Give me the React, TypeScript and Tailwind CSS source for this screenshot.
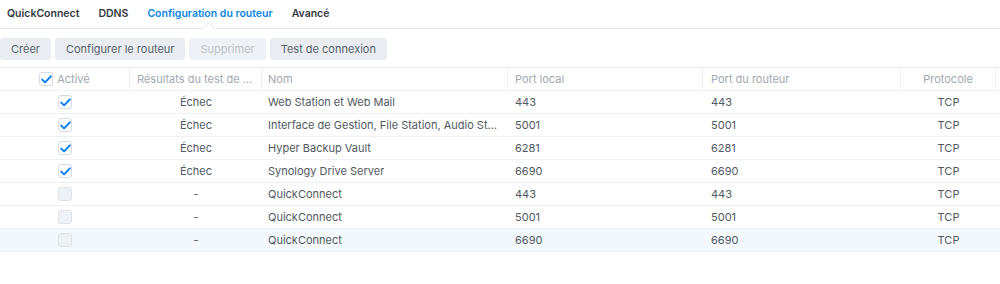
import React from "react";

const rows = [
  { on: true, res: "Échec", name: "Web Station et Web Mail", local: "443", router: "443" },
  { on: true, res: "Échec", name: "Interface de Gestion, File Station, Audio Station, Download Station", local: "5001", router: "5001" },
  { on: true, res: "Échec", name: "Hyper Backup Vault", local: "6281", router: "6281" },
  { on: true, res: "Échec", name: "Synology Drive Server", local: "6690", router: "6690" },
  { on: false, res: "-", name: "QuickConnect", local: "443", router: "443" },
  { on: false, res: "-", name: "QuickConnect", local: "5001", router: "5001" },
  { on: false, res: "-", name: "QuickConnect", local: "6690", router: "6690", hl: true },
];

function Check({ on }: { on: boolean }) {
  return (
    <div
      className={
        "w-[14px] h-[14px] shrink-0 rounded-[3px] border flex items-center justify-center " +
        (on ? "border-[#d5dbe2] bg-white" : "border-[#dde2e8] bg-[#eef1f5]")
      }
    >
      {on && (
        <svg width="11" height="9" viewBox="0 0 11 9">
          <path d="M1.2 4.6 L4.1 7.4 L9.8 1.4" fill="none" stroke="#0a7ff0" strokeWidth="2" strokeLinecap="round" strokeLinejoin="round" />
        </svg>
      )}
    </div>
  );
}

export default function App() {
  const font = { fontFamily: "Inter, 'Noto Sans', sans-serif" };
  return (
    <div className="w-[1000px] h-[284px] bg-white text-[11px] text-[#505962] overflow-hidden" style={font}>
      {/* Tabs */}
      <div className="relative h-[29px] border-b border-[#e3e7ec] flex items-center pl-[7px] gap-[19px] font-semibold text-[10.5px] pb-[1px]">
        <span className="text-[#323a42]">QuickConnect</span>
        <span className="text-[#323a42]">DDNS</span>
        <span className="text-[#0b86e3]">Configuration du routeur</span>
        <span className="text-[#323a42]">Avancé</span>
        <div className="absolute left-[204px] bottom-[-5px] w-[9px] h-[9px] rotate-45 bg-white border-l border-t border-[#e3e7ec]" />
      </div>
      {/* Buttons */}
      <div className="flex gap-[4px] mt-[9px] h-[22px]">
        <button className="h-[22px] px-[11px] rounded-[3px] bg-[#e9edf2] text-[#58626c]">Créer</button>
        <button className="h-[22px] px-[11px] rounded-[3px] bg-[#e9edf2] text-[#58626c]">Configurer le routeur</button>
        <button className="h-[22px] px-[11px] rounded-[3px] bg-[#eef1f5] text-[#bcc3cb]">Supprimer</button>
        <button className="h-[22px] px-[11px] rounded-[3px] bg-[#e9edf2] text-[#58626c]">Test de connexion</button>
      </div>
      {/* Table */}
      <div className="mt-[7px] border-t border-[#e7eaee]">
        <div className="flex h-[23px] border-b border-[#eef0f3] text-[#a0a8b0]">
          <div className="w-[130px] flex items-center justify-center gap-[4px] border-r border-[#eef0f3]">
            <Check on={true} />
            <span>Activé</span>
          </div>
          <div className="w-[132px] flex items-center px-[7px] border-r border-[#eef0f3] min-w-0 overflow-hidden">
            <span className="truncate">Résultats du test de connexion</span>
          </div>
          <div className="w-[246px] flex items-center px-[6px] border-r border-[#eef0f3]">Nom</div>
          <div className="w-[195px] flex items-center px-[7px] border-r border-[#eef0f3]">Port local</div>
          <div className="w-[198px] flex items-center px-[8px] border-r border-[#eef0f3]">Port du routeur</div>
          <div className="w-[95px] flex items-center justify-center border-r border-[#eef0f3]">Protocole</div>
          <div className="flex-1" />
        </div>
        {rows.map((r, i) => (
          <div key={i} className={"flex h-[23px] border-b border-[#eef0f3] " + (r.hl ? "bg-[#f3f8fd]" : "")}>
            <div className="w-[130px] flex items-center justify-center">
              <Check on={r.on} />
            </div>
            <div className="w-[132px] flex items-center justify-center">{r.res}</div>
            <div className="w-[246px] flex items-center px-[6px] min-w-0 overflow-hidden">
              <span className="truncate">{r.name}</span>
            </div>
            <div className="w-[195px] flex items-center px-[7px]">{r.local}</div>
            <div className="w-[198px] flex items-center px-[8px]">{r.router}</div>
            <div className="w-[95px] flex items-center justify-center">TCP</div>
            <div className="flex-1" />
          </div>
        ))}
      </div>
    </div>
  );
}
